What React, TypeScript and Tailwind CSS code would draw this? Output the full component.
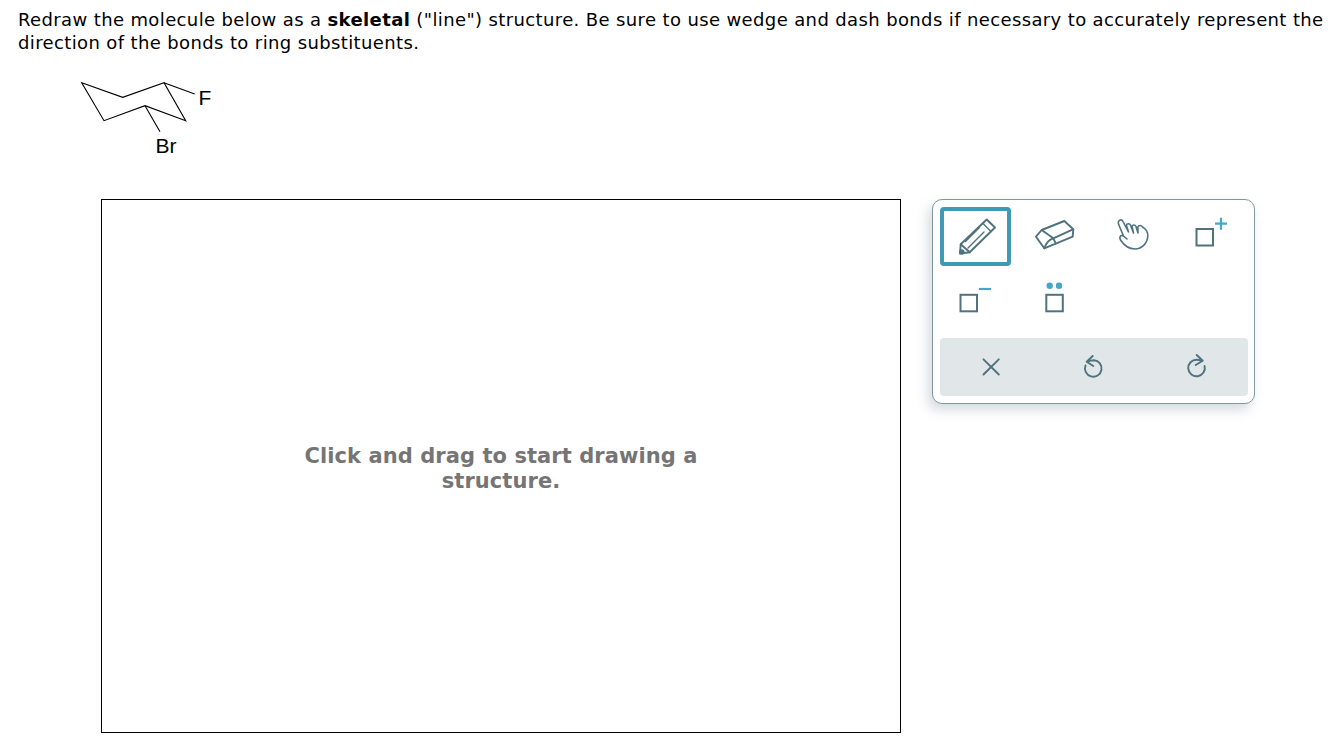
const ink = "#4f727f";
const accent = "#46a6c8";

function LineIcon({ children, vb, w, h }: { children: React.ReactNode; vb: string; w: number; h: number }) {
  return (
    <svg width={w} height={h} viewBox={vb} fill="none" stroke={ink} strokeWidth="1.9" strokeLinejoin="round" strokeLinecap="round">
      {children}
    </svg>
  );
}

function Molecule() {
  return (
    <svg width="180" height="90" viewBox="70 70 180 90" className="block ml-[70px]" fill="none" stroke="#000" strokeWidth="1.1">
      <path d="M81.7 82.7 L122.7 97.3 L164 82.7 L185.7 120.7 L145 105.7 L104 120.7 Z" />
      <path d="M164 82.7 L194.7 94 M145 105.7 L160 131.7" />
      <text x="198.5" y="104.5" fill="#000" stroke="none" fontSize="21" fontFamily="'Liberation Sans', sans-serif">F</text>
      <text x="155.5" y="152.5" fill="#000" stroke="none" fontSize="21" fontFamily="'Liberation Sans', sans-serif">Br</text>
    </svg>
  );
}

function Toolbar() {
  return (
    <div className="w-[323px] h-[205px] rounded-[10px] border border-[#7f989f] bg-white shadow-[-4px_6px_12px_rgba(90,110,120,0.25)] px-[7px] pt-[7px]">
      <div className="grid grid-cols-[76px_78px_78px_76px] grid-rows-[59px_72px]">
        <div className="w-[71px] h-[59px] rounded-[4px] border-[4px] border-[#4299b5] pl-[12px] pt-[5px]">
          <LineIcon vb="956 216 44 40" w={44} h={40}>
            <path d="M986.7 219.5 L995 227.5 L969.7 252.3 L960.7 244.3 Z" />
            <path d="M983 223.5 L991 231.5 M979.5 227.5 L965.5 241.5 M984 232 L968 248" strokeWidth="1.4" />
            <path d="M960.7 244.3 L960 253.5 L969.7 252.3" />
            <circle cx="961.8" cy="252" r="1.8" fill={ink} />
          </LineIcon>
        </div>
        <div className="pl-[17px] pt-[11px]">
          <LineIcon vb="1033 218 44 34" w={44} h={34}>
            <path d="M1036 236.7 L1041.7 230 L1064.3 221 L1073.3 229.3 L1072.7 236.7 L1044.3 248.3 Z" />
            <path d="M1041.7 230 L1053.3 238.3 L1073 229.3 M1053.3 238.3 L1055.7 243.3 M1053.3 238.3 Q1047 240 1044.3 248.3" />
          </LineIcon>
        </div>
        <div className="pl-[22px] pt-[9px]">
          <LineIcon vb="1116 216 36 36" w={36} h={36}>
            <path d="M1123.5 236 L1118.5 224 C1117.5 220 1121.5 218.5 1123 221.5 L1128.5 232 L1126.5 225.5 C1126.5 223.5 1129.5 223 1130.5 225 L1133.5 233 L1132 226.5 C1132.5 224.5 1135 224.5 1136 226.5 L1138 233 L1137.8 227 C1138.5 225 1141.5 225 1142.5 227 C1146 229 1148 232 1147.8 236 C1147.5 243 1142 249 1135 249 C1129 249 1124.5 246 1120.5 240 C1119 237 1120.5 234.5 1123.5 236 L1127 239" strokeWidth="1.6" />
          </LineIcon>
        </div>
        <div className="pl-[22px] pt-[7px]">
          <svg width="36" height="34" viewBox="1194 214 36 34" fill="none">
            <rect x="1196.5" y="229" width="16.5" height="16.5" stroke={ink} strokeWidth="2" />
            <path d="M1215 223.7 H1227 M1221 217.7 V229.7" stroke={accent} strokeWidth="2.2" />
          </svg>
        </div>
        <div className="pl-[19px] pt-[21px]">
          <svg width="34" height="26" viewBox="959 287 34 26" fill="none">
            <rect x="960.5" y="294.8" width="16.5" height="16.5" stroke={ink} strokeWidth="2" />
            <path d="M979 289 H991" stroke={accent} strokeWidth="2.2" />
          </svg>
        </div>
        <div className="pl-[27px] pt-[15px]">
          <svg width="24" height="32" viewBox="1043 281 24 32" fill="none">
            <circle cx="1049.7" cy="285.7" r="3.2" fill={accent} />
            <circle cx="1059" cy="285.7" r="3.2" fill={accent} />
            <rect x="1046.3" y="294.8" width="16.5" height="16.5" stroke={ink} strokeWidth="2" />
          </svg>
        </div>
      </div>
      <div className="w-[308px] h-[58px] rounded-[4px] bg-[#e1e6e8] grid grid-cols-3 items-center justify-items-center">
        <LineIcon vb="981 357 20 20" w={20} h={20}>
          <path d="M983.5 359.3 L998.8 374.5 M998.8 359.3 L983.5 374.5" />
        </LineIcon>
        <LineIcon vb="1083 354 22 26" w={22} h={26}>
          <path d="M1092.7 356 L1086.7 361.7 L1093.3 366" />
          <path d="M1087.5 361.7 Q1090.5 360.2 1094 360.2 A8.3 8.3 0 1 1 1085.5 365.5" />
        </LineIcon>
        <LineIcon vb="1186 353 22 28" w={22} h={28}>
          <path d="M1196.7 355 L1202.7 360.7 L1195.7 365" />
          <path d="M1202 360.8 Q1199 359.7 1196.7 359.7 A8.3 8.3 0 1 0 1204.6 366" />
        </LineIcon>
      </div>
    </div>
  );
}

export default function App() {
  return (
    <div className="w-[1342px] h-[738px] overflow-hidden bg-white text-black font-['DejaVu_Sans',Verdana,sans-serif]">
      <p className="pl-[18px] pt-[8px] w-[1330px] text-[18px] tracking-[0.375px] leading-[23px]">
        Redraw the molecule below as a <b>skeletal</b> ("line") structure. Be sure to use wedge and dash bonds if necessary to accurately represent the direction of the bonds to ring substituents.
      </p>
      <div className="mt-[16px]">
        <Molecule />
      </div>
      <div className="mt-[39px] ml-[101px] flex items-start gap-[31px]">
        <div className="w-[800px] h-[534px] border border-black flex justify-center pt-[244px]">
          <p className="w-[440px] h-fit text-center text-[21px] tracking-[0.07px] leading-[25px] font-bold text-[#757575]">
            Click and drag to start drawing a structure.
          </p>
        </div>
        <Toolbar />
      </div>
    </div>
  );
}
